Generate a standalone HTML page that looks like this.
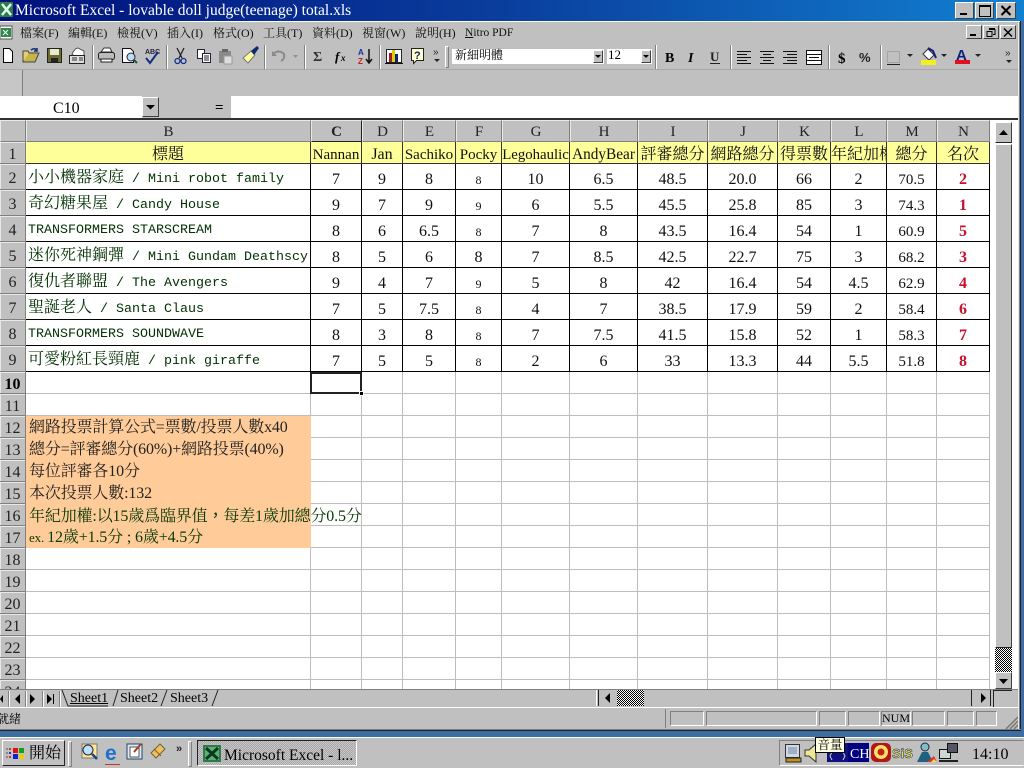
<!DOCTYPE html>
<html><head><meta charset="utf-8"><style>
html,body{margin:0;padding:0;width:1024px;height:768px;overflow:hidden;background:#c0c0c0}
body{position:relative;font-family:"Liberation Serif","Noto Serif CJK SC",serif;color:#000}
.a{position:absolute;white-space:nowrap}
.m{position:absolute;top:26px;font-size:12px;line-height:14px;white-space:nowrap;color:#111}
.sep{position:absolute;top:45px;width:0;height:24px;border-left:1px solid #808080;border-right:1px solid #fff}
svg{position:absolute;overflow:visible}
.btn{position:absolute;background:#c0c0c0;border:1px solid;border-color:#fff #404040 #404040 #fff;box-sizing:border-box}
table{position:absolute;left:0;top:120px;border-collapse:separate;border-spacing:0;table-layout:fixed;width:990px}
td{box-sizing:border-box;padding:0;border-right:1px solid #bdbdbd;border-bottom:1px solid #bdbdbd;white-space:nowrap;text-align:center;font-size:16px;line-height:18px;overflow:visible;color:#111}
tr.h td{background:#c0c0c0;border-right:1px solid #808080;border-bottom:1px solid #808080;border-left:1px solid #e8e8e8;border-top:1px solid #e8e8e8;font-size:15px;color:#222;padding-top:2px}
td.r{background:#c0c0c0!important;border-right:1px solid #808080!important;border-bottom:1px solid #808080!important;box-shadow:inset 1px 1px 0 #e8e8e8;text-align:center;font-size:16px;color:#222;padding-top:4px;line-height:17px}
tr.y td{background:#ffff99;border-color:#333;font-size:16px;padding-top:5px;line-height:16px}
tr.y td.r{padding-top:4px;line-height:17px}
tr.y td.l{font-size:15px}
tr.d td{border-color:#000;padding-top:7px}
tr.d td.r{padding-top:4px}
tr.d td.t{text-align:left;padding-left:2px;padding-top:5px;font-family:"Liberation Mono","Noto Serif CJK SC",monospace;font-size:13.33px;color:#013001}
td.t b{font-weight:normal;font-size:16px;font-family:"Liberation Serif","Noto Serif CJK SC",serif}
.s{font-size:12px}
tr.d td.n{font-size:15px}
tr.d td.k{color:#c8102e;font-weight:bold}
td.o{background:#ffcc99;text-align:left;padding-left:3px;padding-top:2px;font-size:16px;line-height:16px;color:#222;letter-spacing:-.15px}
td.g{color:#063806}
.tab{position:absolute;top:691px;font-size:14px;line-height:16px}
.dith{background-color:#fff;background-image:linear-gradient(45deg,#000 25%,transparent 25%,transparent 75%,#000 75%),linear-gradient(45deg,#000 25%,transparent 25%,transparent 75%,#000 75%);background-size:2px 2px;background-position:0 0,1px 1px}
.p{position:absolute;top:711px;height:15px;border:1px solid;border-color:#808080 #fff #fff #808080;box-sizing:border-box}
</style></head><body>

<!-- title bar -->
<div class="a" style="left:0;top:0;width:1024px;height:21px;background:linear-gradient(90deg,#00107c 0%,#0a3f9e 50%,#1180d0 100%)"></div>
<div class="a" style="left:0;top:21px;width:1020px;height:1px;background:#fff"></div>
<svg style="left:0;top:2px" width="14" height="16"><rect width="13" height="15" fill="#2f7a4a"/><path d="M2 2L11 13M11 2L2 13" stroke="#dfe" stroke-width="2.5"/></svg>
<div class="a" style="left:15px;top:2px;font-size:15.5px;line-height:18px;color:#fff">Microsoft Excel - lovable doll judge(teenage) total.xls</div>
<div class="btn" style="left:955px;top:2px;width:19px;height:17px"></div>
<div class="a" style="left:960px;top:13px;width:7px;height:2px;background:#000"></div>
<div class="btn" style="left:975px;top:2px;width:19px;height:17px"></div>
<div class="a" style="left:979px;top:5px;width:10px;height:9px;border:1px solid #000;border-top-width:2px"></div>
<div class="btn" style="left:996px;top:2px;width:20px;height:17px"></div>
<svg style="left:1000px;top:5px" width="12" height="11"><path d="M1.500 1L10.500 10M10.500 1L1.500 10" stroke="#000" stroke-width="2"/></svg>

<!-- menu -->
<svg style="left:0;top:25px" width="14" height="15"><rect x="0" y="1" width="12" height="13" fill="#fff" stroke="#555"/><rect x="1" y="3" width="10" height="9" fill="#2f8a4a"/><path d="M3 5l5 5M8 5l-5 5" stroke="#fff"/></svg>
<div class="m" style="left:20px">檔案(F)</div>
<div class="m" style="left:68px">編輯(E)</div>
<div class="m" style="left:117px">檢視(V)</div>
<div class="m" style="left:167px">插入(I)</div>
<div class="m" style="left:213px">格式(O)</div>
<div class="m" style="left:263px">工具(T)</div>
<div class="m" style="left:312px">資料(D)</div>
<div class="m" style="left:362px">視窗(W)</div>
<div class="m" style="left:415px">說明(H)</div>
<div class="m" style="left:465px;font-size:11.500px"><u>N</u>itro PDF</div>
<div class="btn" style="left:966px;top:25px;width:16px;height:14px"></div><div class="a" style="left:970px;top:34px;width:6px;height:2px;background:#000"></div>
<div class="btn" style="left:983px;top:25px;width:16px;height:14px"></div><svg style="left:986px;top:27px" width="10" height="10"><path d="M3 2.500h6v5h-2M1 4.500h5v5h-5z" fill="none" stroke="#000"/><path d="M3 1.500h6M1 4.500h5" stroke="#000"/></svg>
<div class="btn" style="left:1000px;top:25px;width:16px;height:14px"></div><svg style="left:1003px;top:28px" width="10" height="9"><path d="M1 .5L9 8.500M9 .5L1 8.500" stroke="#000" stroke-width="1.500"/></svg>

<!-- toolbar icons -->
<svg style="left:0;top:44px" width="450" height="26">
<path d="M3.500 4.500h6l3 3v11h-9z" fill="#fff" stroke="#000"/>
<path d="M23 18l3-9h13l-4 9z" fill="#c9b44a" stroke="#444"/><path d="M23 18V7h5l1 2" fill="#e4d070" stroke="#444"/><path d="M31 6q4-3 6 1M37 4v3h-3" stroke="#103070" fill="none" stroke-width="1.500"/>
<rect x="47.500" y="4.500" width="14" height="14" fill="#6b6b30" stroke="#222"/><rect x="50" y="5" width="9" height="6" fill="#e8e8d0"/><rect x="51" y="14" width="7" height="4" fill="#222"/>
<path d="M72 10q3-6 6-6l6 3v5h-10z" fill="#fff" stroke="#555"/><rect x="69.500" y="11.500" width="15" height="8" fill="#ddd" stroke="#222"/><path d="M72 14h5M72 16h5M79 14h4M79 16h4" stroke="#333"/>
<path d="M101 8l3-4h6l2 4z" fill="#fff" stroke="#333"/><rect x="98.500" y="8.500" width="16" height="7" rx="2" fill="#bbb" stroke="#222"/><path d="M101 15h11v3h-11z" fill="#fff" stroke="#222"/>
<path d="M122.500 4.500h8l3 3v11h-11z" fill="#fff" stroke="#111"/><circle cx="131" cy="13" r="4" fill="#bde" stroke="#224"/><path d="M134 16l3 3" stroke="#254" stroke-width="2"/>
<text x="145" y="10" font-size="7" font-family="Liberation Sans" fill="#224" font-weight="bold">ABC</text><path d="M146 14l4 5 8-11" stroke="#103080" stroke-width="2" fill="none"/>
<path d="M177 4l5 10M184 4l-5 10" stroke="#222" stroke-width="1.300"/><circle cx="177.500" cy="17" r="2.500" fill="none" stroke="#103090" stroke-width="1.300"/><circle cx="183.500" cy="17" r="2.500" fill="none" stroke="#103090" stroke-width="1.300"/>
<path d="M197.500 5.500h7v9h-7z" fill="#fff" stroke="#223"/><path d="M202.500 9.500h8v9h-8z" fill="#fff" stroke="#223"/><path d="M204 12h5M204 14h5M204 16h5" stroke="#223"/>
<rect x="219" y="7" width="12" height="12" fill="#8a8a8a"/><rect x="222" y="5" width="6" height="3" fill="#666"/><rect x="224" y="12" width="8" height="8" fill="#ddd" stroke="#999"/>
<path d="M243 14l8-7 4 4-7 8z" fill="#ffffa0" stroke="#777"/><path d="M251 7l6-5 2 2-5 7z" fill="#102a70"/>
<path d="M273 10q6-5 11 0q1 5-3 7" fill="none" stroke="#8a8a8a" stroke-width="2"/><path d="M272 7v5h5" fill="#8a8a8a"/>
<path d="M293 11h5l-2.500 3z" fill="#909090"/>
<text x="313" y="17" font-size="14" font-family="Liberation Serif" font-weight="bold" fill="#333">Σ</text>
<text x="335" y="17" font-size="13" font-family="Liberation Serif" font-style="italic" font-weight="bold">f</text><text x="341" y="17" font-size="9" font-family="Liberation Serif" font-style="italic" font-weight="bold">x</text>
<text x="358" y="11" font-size="8" font-family="Liberation Sans" font-weight="bold" fill="#1030a0">A</text><text x="358" y="20" font-size="8" font-family="Liberation Sans" font-weight="bold" fill="#c02020">Z</text><path d="M369 5v13M366 15l3 4 3-4" stroke="#111" stroke-width="1.500" fill="none"/>
<rect x="386.500" y="5.500" width="15" height="13" fill="#fff" stroke="#222"/><rect x="389" y="9" width="3" height="9" fill="#a02020"/><rect x="392" y="6" width="3" height="12" fill="#e0d000"/><rect x="395" y="10" width="3" height="8" fill="#102080"/><path d="M385 19.500h18" stroke="#111"/>
<path d="M411.500 4.500h12v12h-7l-3 3v-3h-2z" fill="#ffffd0" stroke="#222"/><text x="414" y="15" font-size="11" font-family="Liberation Sans" font-weight="bold" fill="#102060">?</text>
<text x="433" y="11" font-size="10" font-family="Liberation Sans" fill="#222">»</text><path d="M434 15h6l-3 3z" fill="#222"/>
</svg>
<div class="sep" style="left:92px"></div><div class="sep" style="left:166px"></div><div class="sep" style="left:264px"></div><div class="sep" style="left:304px"></div><div class="sep" style="left:379px"></div>
<div class="a" style="left:445px;top:46px;width:2px;height:20px;border:1px solid;border-color:#fff #808080 #808080 #fff"></div>
<div class="a" style="left:452px;top:49px;width:152px;height:15px;background:#fff"></div>
<div class="a" style="left:455px;top:48px;font-size:12px;line-height:15px">新細明體</div>
<div class="btn" style="left:593px;top:50px;width:10px;height:13px"></div><svg style="left:595px;top:55px" width="6" height="4"><path d="M0 0h6l-3 3z"/></svg>
<div class="a" style="left:607px;top:49px;width:45px;height:15px;background:#fff"></div>
<div class="a" style="left:608px;top:47px;font-size:13px;line-height:16px">12</div>
<div class="btn" style="left:641px;top:50px;width:10px;height:13px"></div><svg style="left:643px;top:55px" width="6" height="4"><path d="M0 0h6l-3 3z"/></svg>
<div class="sep" style="left:655px"></div><div class="sep" style="left:730px"></div><div class="sep" style="left:828px"></div><div class="sep" style="left:880px"></div>
<svg style="left:660px;top:44px" width="364" height="26">
<text x="5" y="18" font-size="14" font-family="Liberation Serif" font-weight="bold">B</text>
<text x="28" y="18" font-size="14" font-family="Liberation Serif" font-weight="bold" font-style="italic">I</text>
<text x="50" y="17" font-size="13" font-family="Liberation Serif" font-weight="bold" fill="#222">U</text><path d="M50 19.500h10" stroke="#222"/>
<path d="M77 7.500h14M77 10.500h10M77 13.500h14M77 16.500h10M77 19.500h14" stroke="#111"/>
<path d="M100 7.500h14M103 10.500h8M100 13.500h14M103 16.500h8M100 19.500h14" stroke="#111"/>
<path d="M123 7.500h14M127 10.500h10M123 13.500h14M127 16.500h10M123 19.500h14" stroke="#111"/>
<rect x="146.500" y="6.500" width="15" height="14" fill="#fff" stroke="#111"/><path d="M147 10.500h14M147 16.500h14M149 13.500h10" stroke="#111"/>
<text x="178" y="19" font-size="15" font-family="Liberation Serif" font-weight="bold">$</text>
<text x="199" y="18" font-size="13" font-family="Liberation Sans" font-weight="bold" fill="#222">%</text>
<rect x="227.500" y="7.500" width="12" height="11" fill="none" stroke="#888" stroke-dasharray="1 1"/><path d="M227 20.500h13" stroke="#222"/>
<path d="M247 10h6l-3 3z" fill="#222"/>
<path d="M263 10l5-5 6 6-5 5z" fill="#fff" stroke="#333"/><path d="M268 4l5 3 3 7" fill="none" stroke="#102080" stroke-width="2"/><rect x="261" y="16" width="15" height="5" fill="#f2f020"/>
<path d="M281 10h6l-3 3z" fill="#222"/>
<text x="296" y="16" font-size="15" font-family="Liberation Sans" font-weight="bold" fill="#102080">A</text><rect x="295" y="16" width="15" height="4" fill="#e01020"/>
<path d="M315 10h6l-3 3z" fill="#222"/>
<text x="345" y="12" font-size="10" font-family="Liberation Sans" fill="#222">»</text><path d="M346 16h6l-3 3z" fill="#222"/>
</svg>
<div class="a" style="left:0;top:69px;width:1018px;height:1px;background:#a8a8a8"></div>
<div class="a" style="left:0;top:70px;width:22px;height:26px;border-right:1px solid #808080;border-bottom:1px solid #808080;background:#c6c6c6"></div>

<!-- formula bar -->
<div class="a" style="left:0;top:96px;width:142px;height:22px;background:#fff"></div>
<div class="a" style="left:53px;top:99px;font-size:16px;line-height:20px">C10</div>
<div class="btn" style="left:142px;top:97px;width:17px;height:20px"></div><svg style="left:146px;top:105px" width="9" height="5"><path d="M0 0h9l-4.500 4.500z"/></svg>
<div class="a" style="left:215px;top:101px;font-size:15px;font-weight:bold;line-height:15px">=</div>
<div class="a" style="left:231px;top:96px;width:787px;height:22px;background:#fff"></div>
<div class="a" style="left:0;top:118px;width:1018px;height:2px;background:#303030"></div>

<!-- sheet -->
<div class="a" style="left:0;top:120px;width:993px;height:569px;overflow:hidden;background:#fff">
<table style="top:0">
<colgroup><col style="width:26px"><col style="width:285px"><col style="width:51px"><col style="width:41px"><col style="width:53px"><col style="width:46px"><col style="width:68px"><col style="width:68px"><col style="width:70px"><col style="width:70px"><col style="width:53px"><col style="width:56px"><col style="width:50px"><col style="width:53px"></colgroup>
<tr class="h" style="height:22px"><td></td><td>B</td><td style="font-weight:bold;border-right-color:#222;border-bottom-color:#222">C</td><td>D</td><td>E</td><td>F</td><td>G</td><td>H</td><td>I</td><td>J</td><td>K</td><td>L</td><td>M</td><td>N</td></tr>
<tr class="y" style="height:22px"><td class="r">1</td><td>標題</td><td class="l">Nannan</td><td>Jan</td><td class="l">Sachiko</td><td class="l">Pocky</td><td class="l" style="font-size:14.800px">Legohaulic</td><td class="l" style="font-size:15.300px">AndyBear</td><td>評審總分</td><td>網路總分</td><td>得票數</td><td style="overflow:hidden">年紀加權</td><td>總分</td><td>名次</td></tr>
<tr class="d" style="height:26px"><td class="r">2</td><td class="t"><b>小小機器家庭</b> / Mini robot family</td><td>7</td><td>9</td><td>8</td><td class="s">8</td><td>10</td><td>6.5</td><td>48.5</td><td>20.0</td><td>66</td><td>2</td><td class="n">70.5</td><td class="k">2</td></tr>
<tr class="d" style="height:26px"><td class="r">3</td><td class="t"><b>奇幻糖果屋</b> / Candy House</td><td>9</td><td>7</td><td>9</td><td class="s">9</td><td>6</td><td>5.5</td><td>45.5</td><td>25.8</td><td>85</td><td>3</td><td class="n">74.3</td><td class="k">1</td></tr>
<tr class="d" style="height:26px"><td class="r">4</td><td class="t">TRANSFORMERS STARSCREAM</td><td>8</td><td>6</td><td>6.5</td><td class="s">8</td><td>7</td><td>8</td><td>43.5</td><td>16.4</td><td>54</td><td>1</td><td class="n">60.9</td><td class="k">5</td></tr>
<tr class="d" style="height:26px"><td class="r">5</td><td class="t"><b>迷你死神鋼彈</b> / Mini Gundam Deathscy</td><td>8</td><td>5</td><td>6</td><td>8</td><td>7</td><td>8.5</td><td>42.5</td><td>22.7</td><td>75</td><td>3</td><td class="n">68.2</td><td class="k">3</td></tr>
<tr class="d" style="height:26px"><td class="r">6</td><td class="t"><b>復仇者聯盟</b> / The Avengers</td><td>9</td><td>4</td><td>7</td><td class="s">9</td><td>5</td><td>8</td><td>42</td><td>16.4</td><td>54</td><td>4.5</td><td class="n">62.9</td><td class="k">4</td></tr>
<tr class="d" style="height:26px"><td class="r">7</td><td class="t"><b>聖誕老人</b> / Santa Claus</td><td>7</td><td>5</td><td>7.5</td><td class="s">8</td><td>4</td><td>7</td><td>38.5</td><td>17.9</td><td>59</td><td>2</td><td class="n">58.4</td><td class="k">6</td></tr>
<tr class="d" style="height:26px"><td class="r">8</td><td class="t">TRANSFORMERS SOUNDWAVE</td><td>8</td><td>3</td><td>8</td><td class="s">8</td><td>7</td><td>7.5</td><td>41.5</td><td>15.8</td><td>52</td><td>1</td><td class="n">58.3</td><td class="k">7</td></tr>
<tr class="d" style="height:26px"><td class="r">9</td><td class="t"><b>可愛粉紅長頸鹿</b> / pink giraffe</td><td>7</td><td>5</td><td>5</td><td class="s">8</td><td>2</td><td>6</td><td>33</td><td>13.3</td><td>44</td><td>5.5</td><td class="n">51.8</td><td class="k">8</td></tr>
<tr style="height:22px"><td class="r" style="font-weight:bold;color:#000">10</td><td></td><td></td><td></td><td></td><td></td><td></td><td></td><td></td><td></td><td></td><td></td><td></td><td></td></tr>
<tr style="height:22px"><td class="r">11</td><td></td><td></td><td></td><td></td><td></td><td></td><td></td><td></td><td></td><td></td><td></td><td></td><td></td></tr>
<tr style="height:22px"><td class="r">12</td><td class="o" style="border:0">網路投票計算公式=票數/投票人數x40</td><td></td><td></td><td></td><td></td><td></td><td></td><td></td><td></td><td></td><td></td><td></td><td></td></tr>
<tr style="height:22px"><td class="r">13</td><td class="o" style="border:0">總分=評審總分(60%)+網路投票(40%)</td><td></td><td></td><td></td><td></td><td></td><td></td><td></td><td></td><td></td><td></td><td></td><td></td></tr>
<tr style="height:22px"><td class="r">14</td><td class="o" style="border:0">每位評審各10分</td><td></td><td></td><td></td><td></td><td></td><td></td><td></td><td></td><td></td><td></td><td></td><td></td></tr>
<tr style="height:22px"><td class="r">15</td><td class="o" style="border:0">本次投票人數:132</td><td></td><td></td><td></td><td></td><td></td><td></td><td></td><td></td><td></td><td></td><td></td><td></td></tr>
<tr style="height:22px"><td class="r">16</td><td class="o g" style="border:0;position:relative">年紀加權:以15歲爲臨界值<span style='font-family:"Noto Sans CJK TC",sans-serif;line-height:12px'>，</span>每差1歲加總分0.5分</td><td></td><td></td><td></td><td></td><td></td><td></td><td></td><td></td><td></td><td></td><td></td><td></td></tr>
<tr style="height:22px"><td class="r">17</td><td class="o g" style="border:0"><span style="font-size:13px;line-height:12px">ex. </span>12歲+1.5分 ; 6歲+4.5分</td><td></td><td></td><td></td><td></td><td></td><td></td><td></td><td></td><td></td><td></td><td></td><td></td></tr>
<tr style="height:22px"><td class="r">18</td><td></td><td></td><td></td><td></td><td></td><td></td><td></td><td></td><td></td><td></td><td></td><td></td><td></td></tr>
<tr style="height:22px"><td class="r">19</td><td></td><td></td><td></td><td></td><td></td><td></td><td></td><td></td><td></td><td></td><td></td><td></td><td></td></tr>
<tr style="height:22px"><td class="r">20</td><td></td><td></td><td></td><td></td><td></td><td></td><td></td><td></td><td></td><td></td><td></td><td></td><td></td></tr>
<tr style="height:22px"><td class="r">21</td><td></td><td></td><td></td><td></td><td></td><td></td><td></td><td></td><td></td><td></td><td></td><td></td><td></td></tr>
<tr style="height:22px"><td class="r">22</td><td></td><td></td><td></td><td></td><td></td><td></td><td></td><td></td><td></td><td></td><td></td><td></td><td></td></tr>
<tr style="height:22px"><td class="r">23</td><td></td><td></td><td></td><td></td><td></td><td></td><td></td><td></td><td></td><td></td><td></td><td></td><td></td></tr>
<tr style="height:22px"><td class="r">24</td><td></td><td></td><td></td><td></td><td></td><td></td><td></td><td></td><td></td><td></td><td></td><td></td><td></td></tr>
</table>
</div>
<div class="a" style="left:310px;top:372px;width:48px;height:18px;border:2px solid #222"></div>
<div class="a" style="left:359px;top:391px;background:#000;border:1px solid #fff;width:3px;height:3px"></div>

<!-- vertical scrollbar -->
<div class="a" style="left:993px;top:120px;width:25px;height:569px;background:#fff"></div>
<div class="btn" style="left:995px;top:144px;width:17px;height:504px;border-bottom-color:#222"></div>
<div class="btn" style="left:995px;top:122px;width:17px;height:21px;border-bottom-color:#222"></div>
<svg style="left:999px;top:130px" width="9" height="5"><path d="M4.500 0L9 5H0z"/></svg>
<div class="a dith" style="left:995px;top:648px;width:17px;height:24px"></div>
<div class="btn" style="left:995px;top:672px;width:17px;height:17px"></div>
<svg style="left:999px;top:679px" width="9" height="5"><path d="M0 0h9L4.500 5z"/></svg>

<!-- tabs + hscroll -->
<div class="a" style="left:0;top:689px;width:1018px;height:19px;background:#c0c0c0;border-top:1px solid #808080;box-sizing:border-box"></div>
<div class="a" style="left:0;top:707px;width:1018px;height:1px;background:#fff"></div>
<svg style="left:0;top:690px" width="64" height="17"><path d="M8.500 1v16M25.500 1v16M42.500 1v16M59.500 1v16" stroke="#808080"/><path d="M9.500 1v16M26.500 1v16M43.500 1v16M60.500 1v16" stroke="#fff"/><path d="M0 9l3-4v8zM15 9l5-5v10zM30 4l5 5-5 5zM47 4l5 5-5 5z" fill="#000"/><path d="M53.500 4v10" stroke="#000"/></svg>
<svg style="left:60px;top:690px" width="160" height="17"><path d="M2 0l6 16H48M53 16l5-16M101 16l6-16M152 16l6-16" fill="none" stroke="#222"/></svg>
<div class="tab" style="left:70px"><u>Sheet1</u></div>
<div class="tab" style="left:120px">Sheet2</div>
<div class="tab" style="left:170px">Sheet3</div>
<div class="a" style="left:596px;top:690px;width:1px;height:16px;background:#fff"></div>
<div class="a" style="left:598px;top:690px;width:1px;height:16px;background:#222"></div>
<svg style="left:605px;top:693px" width="6" height="10"><path d="M5 0v10L0 5z"/></svg>
<div class="a dith" style="left:617px;top:690px;width:27px;height:16px"></div>
<div class="a" style="left:971px;top:690px;width:1px;height:16px;background:#222"></div>
<svg style="left:981px;top:693px" width="6" height="10"><path d="M0 0v10l5-5z"/></svg>
<div class="a" style="left:990px;top:690px;width:1px;height:16px;background:#222"></div>
<div class="a" style="left:993px;top:690px;width:19px;height:17px;background:#c0c0c0;border-left:1px solid #222;border-top:1px solid #222;box-sizing:border-box"></div>

<!-- status -->
<div class="a" style="left:0;top:711px;font-size:12px;line-height:16px;margin-left:-3px">就緒</div>
<div class="a" style="left:665px;top:709px;width:1px;height:19px;background:#808080"></div>
<div class="p" style="left:670px;width:34px"></div>
<div class="p" style="left:706px;width:111px"></div>
<div class="p" style="left:819px;width:27px"></div>
<div class="p" style="left:848px;width:32px"></div>
<div class="p" style="left:881px;width:30px"></div>
<div class="a" style="left:882px;top:711px;font-size:12px;line-height:15px">NUM</div>
<div class="p" style="left:912px;width:33px"></div>
<div class="p" style="left:947px;width:27px"></div>
<div class="p" style="left:976px;width:21px"></div>
<svg style="left:1005px;top:716px" width="14" height="14"><path d="M13 1L1 13M13 5L5 13M13 9L9 13" stroke="#777" stroke-width="1.500"/></svg>

<!-- window frame / desktop -->
<div class="a" style="left:1018px;top:22px;width:1px;height:709px;background:#e8e8e8"></div>
<div class="a" style="left:1019px;top:22px;width:1px;height:709px;background:#808080"></div>
<div class="a" style="left:1020px;top:21px;width:1px;height:711px;background:#222"></div>
<div class="a" style="left:1021px;top:21px;width:3px;height:716px;background:#3a6ea5"></div>
<div class="a" style="left:0;top:729px;width:1021px;height:1px;background:#808080"></div>
<div class="a" style="left:0;top:730px;width:1021px;height:1px;background:#222"></div>
<div class="a" style="left:0;top:731px;width:1024px;height:6px;background:#3a6ea5"></div>
<div class="a" style="left:0;top:737px;width:1024px;height:1px;background:#fff"></div>

<!-- taskbar -->
<div class="btn" style="left:2px;top:740px;width:63px;height:26px;border-color:#fff #222 #222 #fff"></div>
<svg style="left:5px;top:746px" width="22" height="15"><g fill="#333"><rect x="1" y="2" width="2" height="2" fill="#888"/><rect x="4" y="2" width="2" height="2" fill="#c33"/><rect x="1" y="6" width="2" height="2" fill="#888"/><rect x="4" y="6" width="2" height="2" fill="#33c"/><rect x="1" y="10" width="2" height="2" fill="#888"/><rect x="4" y="10" width="2" height="2" fill="#c33"/></g><rect x="8" y="2" width="5" height="5" fill="#e01010"/><rect x="14" y="2" width="5" height="5" fill="#10a020"/><rect x="8" y="8" width="5" height="5" fill="#1020d0"/><rect x="14" y="8" width="5" height="5" fill="#e0d010"/></svg>
<div class="a" style="left:29px;top:744px;font-size:16px;line-height:20px">開始</div>
<div class="a" style="left:68px;top:741px;width:2px;height:24px;border:1px solid;border-color:#fff #808080 #808080 #fff"></div>
<svg style="left:78px;top:740px" width="90" height="26">
<rect x="4" y="4" width="15" height="14" fill="#ffe890" stroke="#777"/><circle cx="10" cy="10" r="5" fill="#bfe0ff" stroke="#224"/><path d="M14 14l5 5" stroke="#204090" stroke-width="2.500"/>
<text x="27" y="20" font-size="21" font-family="Liberation Sans" font-weight="bold" fill="#2070d0">e</text><path d="M27 24.500h15" stroke="#d03030"/>
<rect x="49" y="4" width="15" height="15" fill="#dfe8f0" stroke="#246"/><rect x="52" y="7" width="9" height="10" fill="#fff" stroke="#555"/><path d="M56 12l7-8" stroke="#a04020" stroke-width="2"/>
<path d="M73 13l9-9 5 5-9 9z" fill="#f0c060" stroke="#664"/><path d="M76 9l7 7" stroke="#a05010"/>
<text x="98" y="12" font-size="11" font-family="Liberation Sans" font-weight="bold" fill="#222">»</text>
</svg>
<div class="a" style="left:188px;top:741px;width:2px;height:24px;border:1px solid;border-color:#fff #808080 #808080 #fff"></div>
<div class="a dith" style="left:197px;top:741px;width:160px;height:25px;opacity:.13"></div>
<div class="a" style="left:197px;top:740px;width:160px;height:26px;border:1px solid;border-color:#222 #fff #fff #222;box-sizing:border-box"></div>
<svg style="left:202px;top:744px" width="20" height="20"><rect x=".5" y=".5" width="19" height="18" fill="#2f7a4a" stroke="#bbb"/><rect x="3" y="3" width="14" height="13" fill="#5fae7a"/><path d="M4 4l12 11M16 4L4 15" stroke="#0a3a1a" stroke-width="3"/></svg>
<div class="a" style="left:224px;top:747px;font-size:15.500px;line-height:18px">Microsoft Excel - l...</div>

<!-- tray -->
<div class="a" style="left:779px;top:740px;width:245px;height:26px;border:1px solid;border-color:#808080 transparent #fff #808080;box-sizing:border-box"></div>
<svg style="left:784px;top:742px" width="180" height="24">
<rect x="1.500" y="2.500" width="14" height="13" fill="#d0d8e8" stroke="#333"/><rect x="4" y="5" width="9" height="7" fill="#a0b0c0"/><rect x="2" y="16" width="15" height="4" fill="#c09020" stroke="#222"/>
<path d="M21 8h4l7-6v18l-7-6h-4z" fill="#f0e890" stroke="#333"/>
<rect x="43" y="1" width="21" height="19" fill="#101080"/><path d="M48 10l-2 4 2 4M59 10l2 4-2 4" stroke="#ccc" fill="none"/>
<rect x="64" y="1" width="21" height="19" fill="#000080"/><text x="66" y="16" font-size="14" font-family="Liberation Serif" fill="#fff">CH</text>
<rect x="87" y="1" width="20" height="19" rx="5" fill="#b01818"/><circle cx="97" cy="10" r="7" fill="#f8e060"/><circle cx="97" cy="10" r="3.500" fill="#c02020"/>
<text x="108" y="16" font-size="13" font-family="Liberation Sans" font-weight="bold" fill="#f0e040" stroke="#125" stroke-width=".5">SiS</text>
<circle cx="141" cy="5" r="4" fill="#80c0c0" stroke="#225"/><path d="M133 20l5-10h6l5 10z" fill="#206080"/><path d="M143 20l7-6 3 6z" fill="#e03030"/><path d="M147 20l3-3 3 3z" fill="#f0e040"/>
<rect x="155.500" y="7.500" width="11" height="9" fill="#cfd6d6" stroke="#111"/><rect x="163.500" y="1.500" width="10" height="9" fill="#556" stroke="#111"/><path d="M155 19h19" stroke="#222" stroke-width="2"/>
</svg>
<div class="a" style="left:972px;top:745px;font-size:16px;line-height:20px">14:10</div>
<div class="a" style="left:815px;top:737px;width:30px;height:16px;background:#ffffe1;border:1px solid #000;box-sizing:border-box;font-size:12.500px;line-height:14px;text-align:center">音量</div>
</body></html>
